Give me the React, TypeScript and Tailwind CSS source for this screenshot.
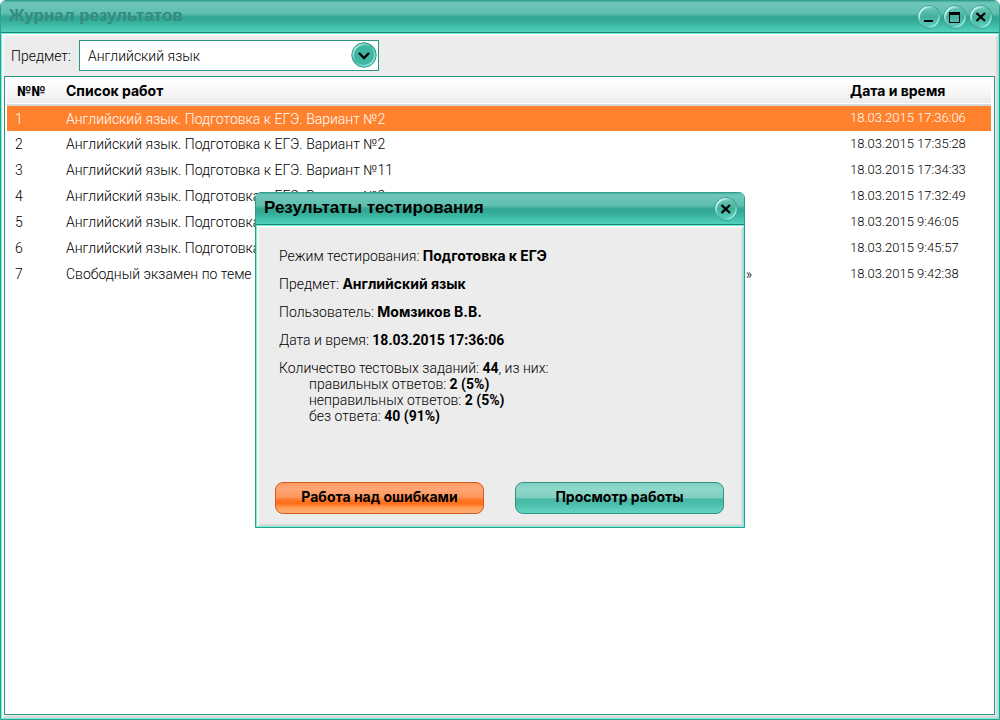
import React, { useState } from 'react';

interface Work {
  id: number;
  title: string;
  tail?: string;
  date: string;
}

const works: Work[] = [
  { id: 1, title: 'Английский язык. Подготовка к ЕГЭ. Вариант №2', date: '18.03.2015 17:36:06' },
  { id: 2, title: 'Английский язык. Подготовка к ЕГЭ. Вариант №2', date: '18.03.2015 17:35:28' },
  { id: 3, title: 'Английский язык. Подготовка к ЕГЭ. Вариант №11', date: '18.03.2015 17:34:33' },
  { id: 4, title: 'Английский язык. Подготовка к ЕГЭ. Вариант №2', date: '18.03.2015 17:32:49' },
  { id: 5, title: 'Английский язык. Подготовка к ЕГЭ', date: '18.03.2015 9:46:05' },
  { id: 6, title: 'Английский язык. Подготовка к ЕГЭ', date: '18.03.2015 9:45:57' },
  { id: 7, title: 'Свободный экзамен по теме', tail: '»', date: '18.03.2015 9:42:38' },
];

const details = [
  { label: 'Режим тестирования:', value: 'Подготовка к ЕГЭ' },
  { label: 'Предмет:', value: 'Английский язык' },
  { label: 'Пользователь:', value: 'Момзиков В.В.' },
];

const answers = [
  { label: 'правильных ответов:', value: '2 (5%)' },
  { label: 'неправильных ответов:', value: '2 (5%)' },
  { label: 'без ответа:', value: '40 (91%)' },
];

const titleBar =
  'flex h-8 shrink-0 items-center justify-between border-b border-[#238273] bg-[linear-gradient(#4aa99a_0%,#6fc8ba_6%,#5fbfae_40%,#30a592_52%,#35ad99_65%,#52d2bd_100%)]';

const bevel = 'border border-[#6ff3dd] shadow-[inset_2px_2px_0_#f8f8f8,inset_-2px_-2px_0_#d9d9d9]';

const wideBold = "font-['Inter',sans-serif] font-bold";

const GlyphButton = ({ kind, label, onClick }: { kind: 'min' | 'max' | 'close'; label: string; onClick?: () => void }) => (
  <button type="button" aria-label={label} onClick={onClick} className="h-6 w-6">
    <svg viewBox="0 0 24 24" className="h-6 w-6">
      <defs>
        <linearGradient id={`rim-${kind}`} x1="0" y1="0" x2="1" y2="1">
          <stop offset="0.1" stopColor="#d8fff8" />
          <stop offset="0.4" stopColor="#5fc4b3" />
          <stop offset="0.65" stopColor="#52b9a7" />
          <stop offset="0.9" stopColor="#98f5e6" />
        </linearGradient>
        <linearGradient id={`face-${kind}`} x1="0" y1="0" x2="0" y2="1">
          <stop offset="0" stopColor="#6fc8ba" />
          <stop offset="0.5" stopColor="#43ae9c" />
          <stop offset="1" stopColor="#5ad3bf" />
        </linearGradient>
      </defs>
      <circle cx="12" cy="12" r="11.4" fill="#62c3b3" stroke="#3a9a8a" strokeWidth="1" />
      <circle cx="12" cy="12" r="10" fill={`url(#face-${kind})`} stroke={`url(#rim-${kind})`} strokeWidth="1.8" />
      {kind === 'min' && <path d="M7 16h9" stroke="#000" strokeWidth="2" />}
      {kind === 'max' && (
        <>
          <path d="M6.5 8v9.5h10V8" fill="none" stroke="#000" />
          <path d="M6 8.5h11" stroke="#000" strokeWidth="3" />
        </>
      )}
      {kind === 'close' && <path d="M7.5 8l8.5 8M16 8L7.5 16" stroke="#000" strokeWidth="2.3" />}
    </svg>
  </button>
);

const ResultsDialog = ({ onClose }: { onClose: () => void }) => (
  <div
    role="dialog"
    aria-label="Результаты тестирования"
    className="flex w-[490px] flex-col overflow-hidden rounded-t-md border border-[#2f9f8d] bg-[#ececec]"
  >
    <div className={`${titleBar} pr-1.5 pl-2`}>
      <h2 className="font-['Liberation_Sans',sans-serif] text-[17px] font-bold">Результаты тестирования</h2>
      <GlyphButton kind="close" label="Закрыть" onClick={onClose} />
    </div>
    <div className={`${bevel} pt-[22px] pr-[19px] pb-3 pl-[18px]`}>
      <div className="ml-1 space-y-3">
        {details.map((d) => (
          <p key={d.label} className="leading-4">
            {d.label} <b className={wideBold}>{d.value}</b>
          </p>
        ))}
        <p className="leading-4">
          Дата и время: <b className="font-bold">18.03.2015 17:36:06</b>
        </p>
        <div className="leading-4">
          <p>
            Количество тестовых заданий: <b className="font-bold">44</b>, из них:
          </p>
          {answers.map((a) => (
            <p key={a.label} className="ml-[30px]">
              {a.label} <b className="font-bold">{a.value}</b>
            </p>
          ))}
        </div>
      </div>
      <div className="mt-[58px] flex justify-between">
        <button
          type="button"
          className={`${wideBold} h-8 w-[209px] rounded-lg border border-[#cf5a19] bg-[linear-gradient(#ff9a62_0%,#ffa676_20%,#ff955a_48%,#ff7a2e_54%,#ff6d18_68%,#ff9c55_82%,#ffb27a_100%)] pb-0.5`}
        >
          Работа над ошибками
        </button>
        <button
          type="button"
          className={`${wideBold} h-8 w-[209px] rounded-lg border border-[#2b9482] bg-[linear-gradient(#7fcfc1_0%,#8fd8cb_20%,#80d0c1_48%,#48b8a5_54%,#4abda9_68%,#62d6c2_100%)] pb-0.5`}
        >
          Просмотр работы
        </button>
      </div>
    </div>
  </div>
);

const App: React.FC = () => {
  const [selected, setSelected] = useState(1);
  const [open, setOpen] = useState(true);

  return (
    <div className="relative flex h-screen flex-col overflow-hidden rounded-t-md border border-[#2f9f8d] bg-[#ececec] font-['Roboto','Noto_Sans',sans-serif] text-sm font-light text-black">
      <header className={`${titleBar} pr-1.5 pl-2`}>
        <h1 className="font-['Liberation_Sans',sans-serif] text-[17px] font-bold text-[#358b7e]">Журнал результатов</h1>
        <div className="flex gap-0.5">
          <GlyphButton kind="min" label="Свернуть" />
          <GlyphButton kind="max" label="Развернуть" />
          <GlyphButton kind="close" label="Закрыть" />
        </div>
      </header>

      <main className={`${bevel} flex min-h-0 flex-1 flex-col pt-1 pr-[3px] pb-[3px] pl-0.5`}>
        <div className="mt-0.5 flex items-center pl-[7px]">
          <label htmlFor="subject" className="w-[68px]">
            Предмет:
          </label>
          <div className="relative w-[300px]">
            <select id="subject" className="h-[31px] w-full appearance-none border border-[#2b9482] bg-white pl-2">
              <option>Английский язык</option>
            </select>
            <svg viewBox="0 0 26 26" className="pointer-events-none absolute top-0.5 right-0.5 h-[26px] w-[26px]">
              <defs>
                <linearGradient id="arrow-rim" x1="0" y1="0" x2="1" y2="1">
                  <stop offset="0.1" stopColor="#b5f5ea" />
                  <stop offset="0.45" stopColor="#48bda9" />
                  <stop offset="0.9" stopColor="#8cf0de" />
                </linearGradient>
              </defs>
              <circle cx="13" cy="13" r="12.2" fill="#3fae9b" stroke="#2f8f80" />
              <circle cx="13" cy="13" r="10.8" fill="#40b5a2" stroke="url(#arrow-rim)" strokeWidth="1.6" />
              <path d="M8 11l5 5 5-5" fill="none" stroke="#000" strokeWidth="2.4" />
            </svg>
          </div>
        </div>

        <div className="mt-[5px] min-h-0 flex-1 overflow-hidden border border-[#2b9482] bg-white pr-[3px] pl-0.5">
          <table className="w-full table-fixed text-left">
            <thead>
              <tr className={`${wideBold} h-7 border-b-2 border-[#d6d9dc] bg-[linear-gradient(#ffffff_0%,#fafafa_40%,#ececec_100%)]`}>
                <th className="w-[59px] pl-2.5 font-['Roboto',sans-serif]">№№</th>
                <th>Список работ</th>
                <th className="w-[141px]">Дата и время</th>
              </tr>
            </thead>
            <tbody>
              {works.map((w) => (
                <tr
                  key={w.id}
                  onClick={() => setSelected(w.id)}
                  className={`h-[26px] ${w.id === selected ? 'bg-[#ff812d] text-white' : ''}`}
                >
                  <td className="pl-2">{w.id}</td>
                  <td>
                    <div className="flex w-[686px] justify-between">
                      <span>{w.title}</span>
                      {w.tail && <span>{w.tail}</span>}
                    </div>
                  </td>
                  <td className="text-[13px]">{w.date}</td>
                </tr>
              ))}
            </tbody>
          </table>
        </div>
      </main>

      {open && (
        <div className="pointer-events-none absolute inset-0 flex items-center justify-center">
          <div className="pointer-events-auto">
            <ResultsDialog onClose={() => setOpen(false)} />
          </div>
        </div>
      )}
    </div>
  );
};

export default App;
